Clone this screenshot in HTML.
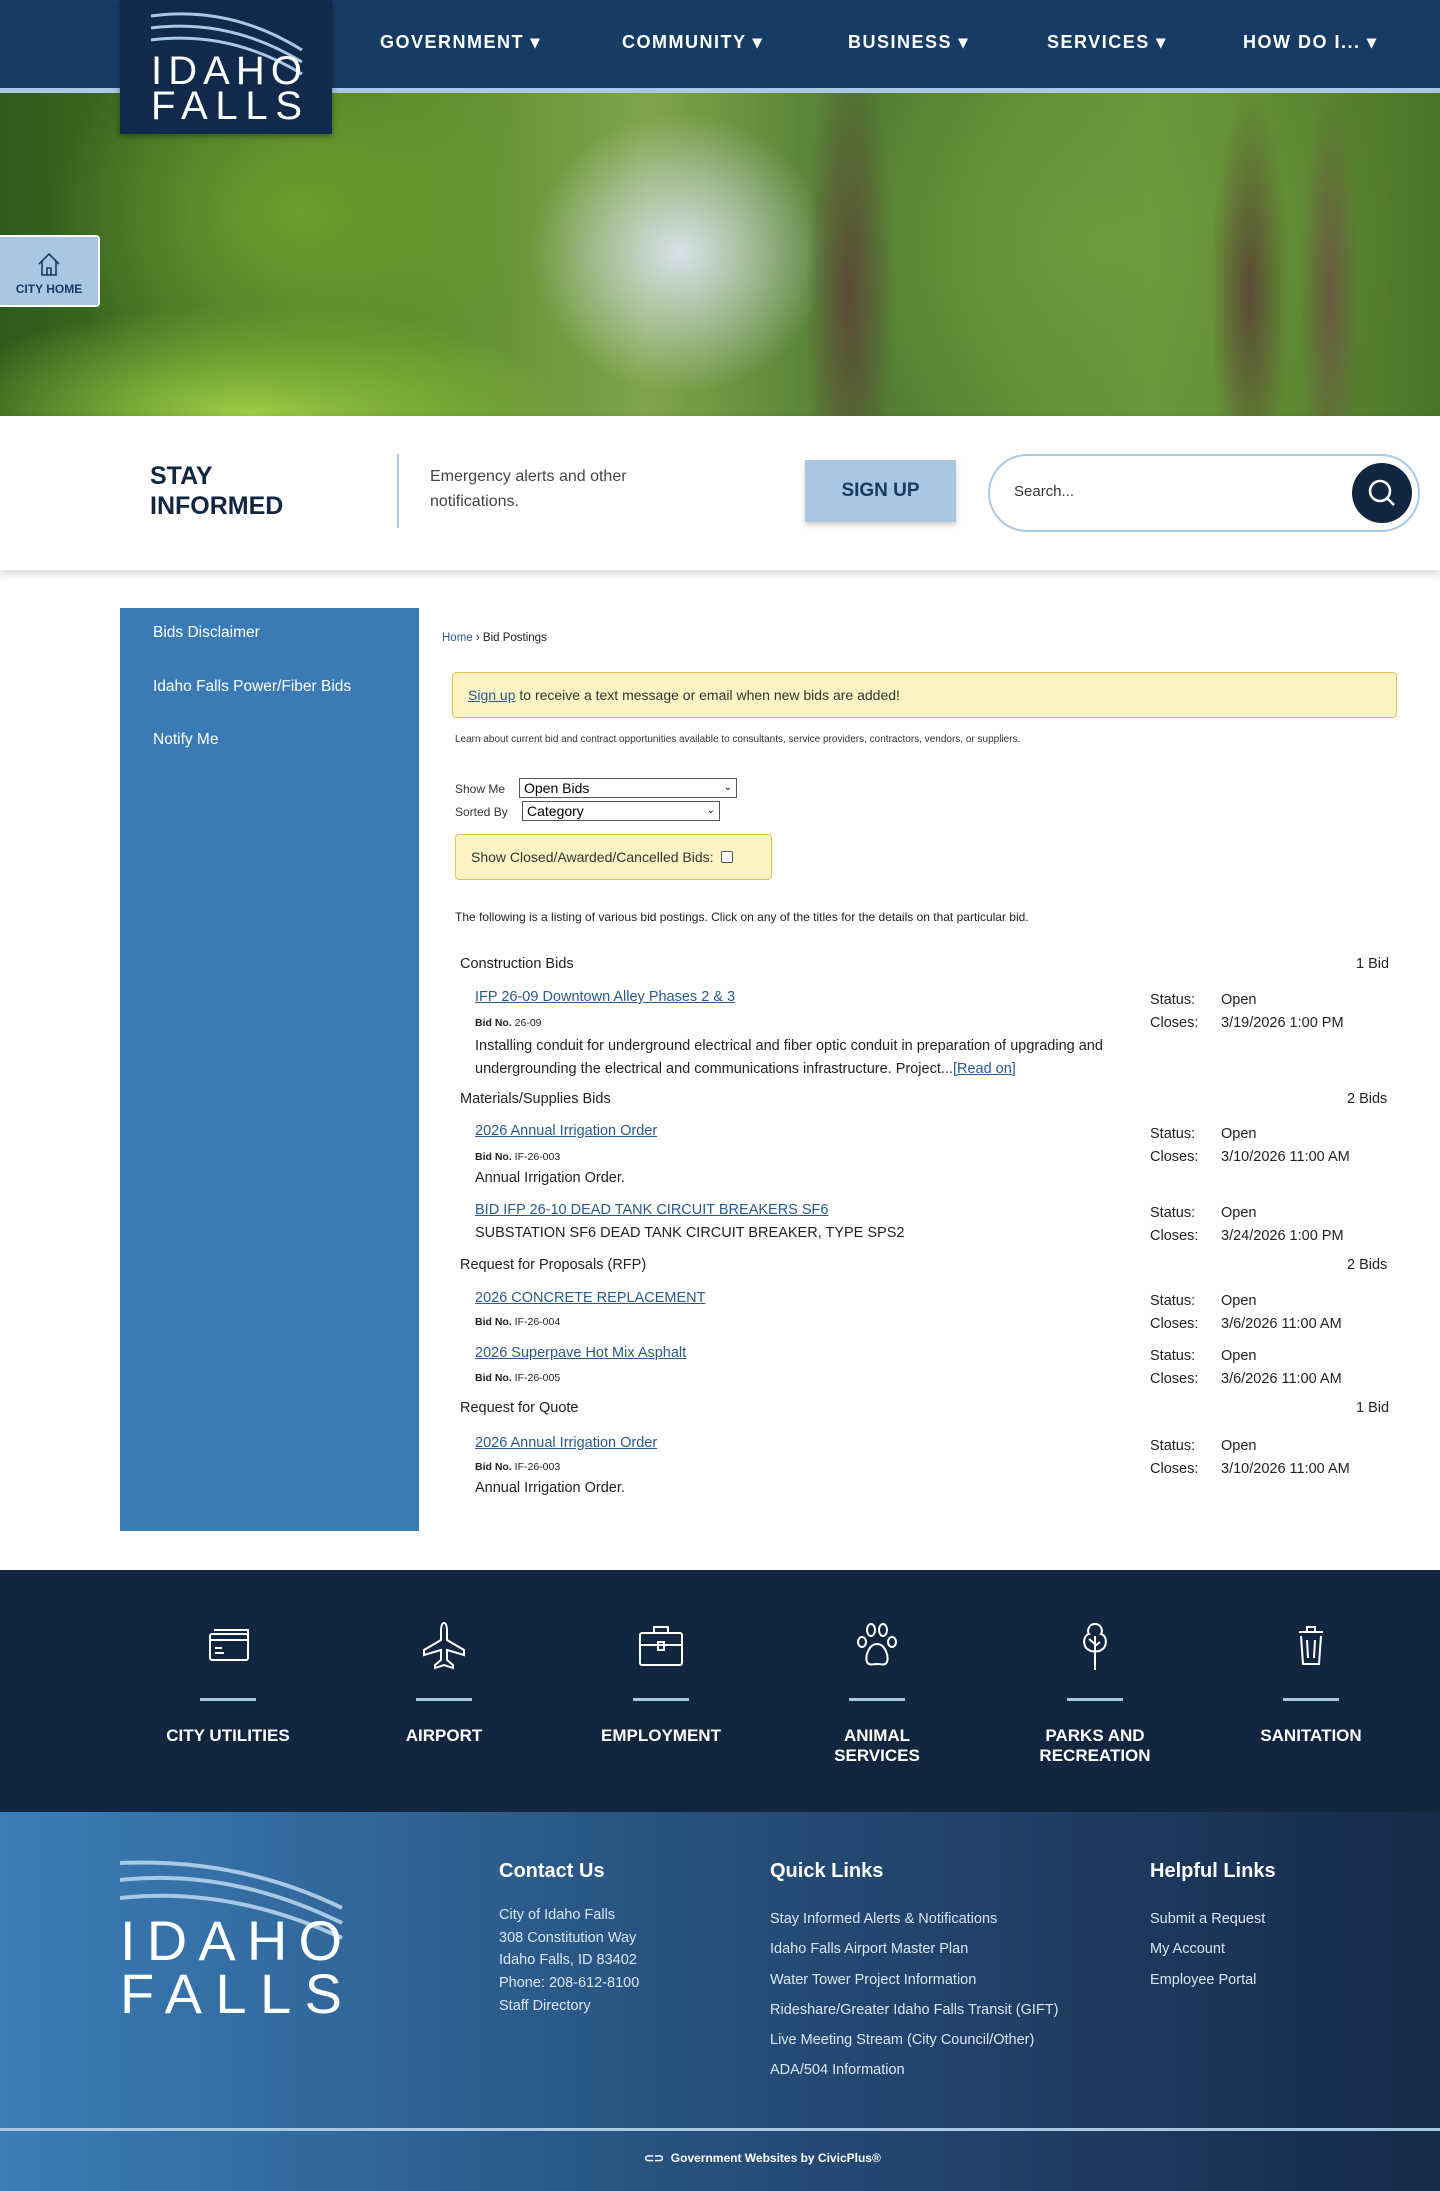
<!DOCTYPE html>
<html><head><meta charset="utf-8"><style>
*{margin:0;padding:0;box-sizing:border-box}
body{width:1440px;height:2191px;position:relative;font-family:"Liberation Sans",Arial,sans-serif;background:#fff;overflow:hidden}
.a{position:absolute;white-space:nowrap}
.nav{left:0;top:0;width:1440px;height:88px;background:#173c63}
.navline{left:0;top:88px;width:1440px;height:5px;background:#a8c8e3}
.nav span{position:absolute;top:32px;color:#fff;font-weight:bold;font-size:18px;letter-spacing:1.5px}
.logo{left:120px;top:0;width:212px;height:134px;background:#11294a;box-shadow:0 2px 6px rgba(0,0,0,.4)}
.hero{left:0;top:93px;width:1440px;height:323px;background:
radial-gradient(ellipse 40px 200px at 1250px 200px,#5a4a34,transparent),
radial-gradient(ellipse 30px 200px at 1330px 200px,#6a5a40,transparent),
radial-gradient(ellipse 45px 250px at 850px 200px,#5b4a36,transparent),
radial-gradient(ellipse 150px 140px at 680px 160px,#d6e2ea,transparent),
radial-gradient(ellipse 250px 200px at 300px 120px,#6e9c2e,transparent),
radial-gradient(ellipse 320px 110px at 250px 320px,#9ccc44,transparent),
radial-gradient(ellipse 300px 250px at 1100px 150px,#6c9a3a,transparent),
linear-gradient(90deg,#2f5a1c,#5e8c2c 30%,#7fa44a 45%,#4f7a32 60%,#6b963a 80%,#4c7428)}
.cityhome{left:0;top:235px;width:100px;height:72px;background:#a7c7e3;border:2px solid #fff;border-left:none;border-radius:0 4px 4px 0;text-align:center;font-size:12px;font-weight:bold;color:#173c63}
.stay{left:0;top:416px;width:1440px;height:154px;background:#fff;box-shadow:0 4px 8px rgba(0,0,0,.15)}
.side{left:120px;top:608px;width:299px;height:923px;background:#3a7bb5}
.side div{position:absolute;left:33px;color:#fff;font-size:15.5px}
.c{font-size:14.5px;color:#222}
.b{font-size:10.5px;color:#222}
.lk,.c.lk{color:#2a5a8c;text-decoration:underline}
.dark{left:0;top:1570px;width:1440px;height:242px;background:#12263f}
.ic{position:absolute;top:1620px;width:200px;text-align:center;color:#fff}
.ic .bar{width:56px;height:3px;background:#a8c8e3;margin:21px auto 0}
.ic .t{font-weight:bold;font-size:17px;margin-top:25px;line-height:20px}
.foot{left:0;top:1812px;width:1440px;height:379px;background:linear-gradient(90deg,#3b7db8,#264f7a 50%,#16294a)}
.foot .h{position:absolute;top:1860px;color:#fff;font-weight:bold;font-size:20px}
.fl{position:absolute;color:#dbe6f2;font-size:14.5px}
</style></head><body>
<div class="a nav">
<span style="left:380px">GOVERNMENT ▾</span>
<span style="left:622px">COMMUNITY ▾</span>
<span style="left:848px">BUSINESS ▾</span>
<span style="left:1047px">SERVICES ▾</span>
<span style="left:1243px">HOW DO I... ▾</span>
</div>
<div class="a navline"></div>
<div class="a hero"></div>
<div class="a logo">
<svg width="212" height="134" style="position:absolute;left:0;top:0"><g fill="none" stroke="#a8c8e3" stroke-width="3"><path d="M31 16 Q110 5 182 50"/><path d="M31 28 Q110 18 182 62"/><path d="M31 40 Q110 30 182 74"/></g>
<text x="31" y="84" fill="#fff" font-family="Liberation Sans" font-size="40" textLength="151" lengthAdjust="spacing">IDAHO</text>
<text x="31" y="119" fill="#fff" font-family="Liberation Sans" font-size="40" textLength="151" lengthAdjust="spacing">FALLS</text></svg>
</div>
<div class="a cityhome"><svg width="30" height="30" viewBox="0 0 30 30" style="margin-top:12px"><path d="M5 15 L15 5 L25 15 M8 12 V26 H22 V12 M13 26 V19 H17 V26" fill="none" stroke="#173c63" stroke-width="1.6"/></svg><div>CITY HOME</div></div>
<div class="a stay">
<div class="a" style="left:150px;top:45px;font-size:25px;font-weight:bold;color:#12263f;line-height:30px">STAY<br>INFORMED</div>
<div class="a" style="left:397px;top:38px;width:2px;height:74px;background:#a8c8e3"></div>
<div class="a" style="left:430px;top:48px;font-size:16px;color:#444;line-height:25px">Emergency alerts and other<br>notifications.</div>
<div class="a" style="left:805px;top:44px;width:151px;height:62px;background:#a7c7e3;box-shadow:0 3px 5px rgba(0,0,0,.2);color:#173c63;font-weight:bold;font-size:19px;text-align:center;line-height:62px">SIGN UP</div>
<div class="a" style="left:988px;top:38px;width:432px;height:78px;border:2px solid #a8c8e3;border-radius:40px;background:#fff"><span class="a" style="left:24px;top:27px;font-size:15px;color:#333">Search...</span>
<div class="a" style="left:362px;top:7px;width:60px;height:60px;border-radius:30px;background:#12263f"><svg width="60" height="60"><circle cx="28" cy="28" r="10" fill="none" stroke="#fff" stroke-width="2.5"/><path d="M35 35 L42 42" stroke="#fff" stroke-width="2.5"/></svg></div></div>
</div>
<div class="a side"><div style="top:16px">Bids Disclaimer</div><div style="top:70px">Idaho Falls Power/Fiber Bids</div><div style="top:123px">Notify Me</div></div>
<div class="a" style="left:442px;top:632px;font-size:11.5px;color:#222"><span style="color:#2a5a8c">Home</span> › Bid Postings</div>
<div class="a" style="left:452px;top:672px;width:945px;height:46px;background:#fbf3c4;border:1px solid #e0c35a;border-radius:4px;font-size:14px;color:#333;padding:14px 0 0 15px"><span class="lk">Sign up</span> to receive a text message or email when new bids are added!</div>
<div class="a" style="left:455px;top:734px;font-size:10px;color:#333">Learn about current bid and contract opportunities available to consultants, service providers, contractors, vendors, or suppliers.</div>
<div class="a" style="left:455px;top:782px;font-size:12px;color:#333">Show Me</div>
<div class="a" style="left:519px;top:778px;width:218px;height:20px;border:1px solid #555;font-size:14px;padding-left:4px;line-height:18px">Open Bids<span style="position:absolute;right:4px;font-size:10px">⌄</span></div>
<div class="a" style="left:455px;top:805px;font-size:12px;color:#333">Sorted By</div>
<div class="a" style="left:522px;top:801px;width:198px;height:20px;border:1px solid #555;font-size:14px;padding-left:4px;line-height:18px">Category<span style="position:absolute;right:4px;font-size:10px">⌄</span></div>
<div class="a" style="left:455px;top:834px;width:317px;height:46px;background:#fbf3c4;border:1px solid #e0c35a;border-radius:4px;font-size:14px;color:#333;padding:14px 0 0 15px">Show Closed/Awarded/Cancelled Bids: &nbsp;<span style="display:inline-block;width:12px;height:12px;border:1px solid #555;border-radius:2px;background:#fff;vertical-align:-1px"></span></div>
<div class="a" style="left:455px;top:910px;font-size:12px;color:#222">The following is a listing of various bid postings. Click on any of the titles for the details on that particular bid.</div>

<div class="a c" style="left:460px;top:956px">Construction Bids</div><div class="a c" style="left:1356px;top:956px">1 Bid</div>
<div class="a c lk" style="left:475px;top:989px">IFP 26-09 Downtown Alley Phases 2 &amp; 3</div>
<div class="a b" style="left:475px;top:1017px"><b>Bid No.</b> 26-09</div>
<div class="a c" style="left:475px;top:1035px;line-height:23px">Installing conduit for underground electrical and fiber optic conduit in preparation of upgrading and<br>undergrounding the electrical and communications infrastructure. Project...<span class="lk">[Read on]</span></div>
<div class="a c" style="left:460px;top:1091px">Materials/Supplies Bids</div><div class="a c" style="left:1347px;top:1091px">2 Bids</div>
<div class="a c lk" style="left:475px;top:1123px">2026 Annual Irrigation Order</div>
<div class="a b" style="left:475px;top:1151px"><b>Bid No.</b> IF-26-003</div>
<div class="a c" style="left:475px;top:1170px">Annual Irrigation Order.</div>
<div class="a c lk" style="left:475px;top:1202px">BID IFP 26-10 DEAD TANK CIRCUIT BREAKERS SF6</div>
<div class="a c" style="left:475px;top:1225px">SUBSTATION SF6 DEAD TANK CIRCUIT BREAKER, TYPE SPS2</div>
<div class="a c" style="left:460px;top:1257px">Request for Proposals (RFP)</div><div class="a c" style="left:1347px;top:1257px">2 Bids</div>
<div class="a c lk" style="left:475px;top:1290px">2026 CONCRETE REPLACEMENT</div>
<div class="a b" style="left:475px;top:1316px"><b>Bid No.</b> IF-26-004</div>
<div class="a c lk" style="left:475px;top:1345px">2026 Superpave Hot Mix Asphalt</div>
<div class="a b" style="left:475px;top:1372px"><b>Bid No.</b> IF-26-005</div>
<div class="a c" style="left:460px;top:1400px">Request for Quote</div><div class="a c" style="left:1356px;top:1400px">1 Bid</div>
<div class="a c lk" style="left:475px;top:1435px">2026 Annual Irrigation Order</div>
<div class="a b" style="left:475px;top:1461px"><b>Bid No.</b> IF-26-003</div>
<div class="a c" style="left:475px;top:1480px">Annual Irrigation Order.</div>

<div class="a c" style="left:1150px;top:989px;line-height:23px">Status:<br>Closes:</div><div class="a c" style="left:1221px;top:989px;line-height:23px">Open<br>3/19/2026 1:00 PM</div>
<div class="a c" style="left:1150px;top:1123px;line-height:23px">Status:<br>Closes:</div><div class="a c" style="left:1221px;top:1123px;line-height:23px">Open<br>3/10/2026 11:00 AM</div>
<div class="a c" style="left:1150px;top:1202px;line-height:23px">Status:<br>Closes:</div><div class="a c" style="left:1221px;top:1202px;line-height:23px">Open<br>3/24/2026 1:00 PM</div>
<div class="a c" style="left:1150px;top:1290px;line-height:23px">Status:<br>Closes:</div><div class="a c" style="left:1221px;top:1290px;line-height:23px">Open<br>3/6/2026 11:00 AM</div>
<div class="a c" style="left:1150px;top:1345px;line-height:23px">Status:<br>Closes:</div><div class="a c" style="left:1221px;top:1345px;line-height:23px">Open<br>3/6/2026 11:00 AM</div>
<div class="a c" style="left:1150px;top:1435px;line-height:23px">Status:<br>Closes:</div><div class="a c" style="left:1221px;top:1435px;line-height:23px">Open<br>3/10/2026 11:00 AM</div>

<div class="a dark"></div>
<div class="ic" style="left:128px"><svg width="52" height="52" viewBox="0 0 52 52" fill="none" stroke="#fff" stroke-width="2"><rect x="8" y="14" width="38" height="26" rx="2"/><path d="M12 10 H46 V36 M8 20 H46 M13 28 H20 M13 33 H22"/></svg><div class="bar"></div><div class="t">CITY UTILITIES</div></div>
<div class="ic" style="left:344px"><svg width="52" height="52" viewBox="0 0 52 52" fill="none" stroke="#fff" stroke-width="2"><path d="M26 3 Q29 3 29 12 V20 L46 30 V35 L29 30 V40 L35 45 V48 L26 45 L17 48 V45 L23 40 V30 L6 35 V30 L23 20 V12 Q23 3 26 3Z"/></svg><div class="bar"></div><div class="t">AIRPORT</div></div>
<div class="ic" style="left:561px"><svg width="52" height="52" viewBox="0 0 52 52" fill="none" stroke="#fff" stroke-width="2"><rect x="5" y="13" width="42" height="32" rx="2"/><path d="M19 13 V7 H33 V13 M5 25 H47 M23 22 H29 V30 H23Z"/></svg><div class="bar"></div><div class="t">EMPLOYMENT</div></div>
<div class="ic" style="left:777px"><svg width="52" height="52" viewBox="0 0 52 52" fill="none" stroke="#fff" stroke-width="2"><ellipse cx="20" cy="10" rx="4" ry="6"/><ellipse cx="32" cy="10" rx="4" ry="6"/><ellipse cx="11" cy="22" rx="4" ry="5"/><ellipse cx="41" cy="22" rx="4" ry="5"/><path d="M26 24 C18 24 14 36 16 42 C18 46 22 44 26 44 C30 44 34 46 36 42 C38 36 34 24 26 24Z"/></svg><div class="bar"></div><div class="t">ANIMAL<br>SERVICES</div></div>
<div class="ic" style="left:995px"><svg width="52" height="52" viewBox="0 0 52 52" fill="none" stroke="#fff" stroke-width="2"><path d="M26 4 C19 4 18 12 20 14 C13 16 14 28 20 30 C22 32 30 32 32 30 C38 28 39 16 32 14 C34 12 33 4 26 4Z M26 16 V50 M26 24 L20 19 M26 26 L31 22"/></svg><div class="bar"></div><div class="t">PARKS AND<br>RECREATION</div></div>
<div class="ic" style="left:1211px"><svg width="52" height="52" viewBox="0 0 52 52" fill="none" stroke="#fff" stroke-width="2"><path d="M14 12 H38 M22 12 V7 H30 V12 M16 16 L18 44 H34 L36 16 M22 20 L23 38 M30 20 L29 38"/></svg><div class="bar"></div><div class="t">SANITATION</div></div>

<div class="a foot"></div>
<svg class="a" style="left:120px;top:1858px" width="230" height="160"><g fill="none" stroke="#a8c8e3" stroke-width="4"><path d="M0 5 Q120 0 222 50"/><path d="M0 22 Q110 10 222 65"/><path d="M0 40 Q110 28 222 80"/></g><text x="0" y="102" fill="#fff" font-family="Liberation Sans" font-size="56" textLength="222" lengthAdjust="spacing">IDAHO</text><text x="0" y="155" fill="#fff" font-family="Liberation Sans" font-size="56" textLength="222" lengthAdjust="spacing">FALLS</text></svg>
<div class="foot"><div class="h" style="left:499px">Contact Us</div><div class="h" style="left:770px">Quick Links</div><div class="h" style="left:1150px">Helpful Links</div></div>
<div class="fl" style="left:499px;top:1904px;line-height:22.7px">City of Idaho Falls<br>308 Constitution Way<br>Idaho Falls, ID 83402<br>Phone: 208-612-8100<br>Staff Directory</div>
<div class="fl" style="left:770px;top:1904px;line-height:30.3px">Stay Informed Alerts &amp; Notifications<br>Idaho Falls Airport Master Plan<br>Water Tower Project Information<br>Rideshare/Greater Idaho Falls Transit (GIFT)<br>Live Meeting Stream (City Council/Other)<br>ADA/504 Information</div>
<div class="fl" style="left:1150px;top:1904px;line-height:30.3px">Submit a Request<br>My Account<br>Employee Portal</div>
<div class="a" style="left:0;top:2128px;width:1440px;height:3px;background:#a8c8e3"></div>
<div class="a" style="left:644px;top:2151px;color:#fff;font-size:12px;font-weight:bold">⊂⊃ &nbsp;Government Websites by CivicPlus®</div>
</body></html>
